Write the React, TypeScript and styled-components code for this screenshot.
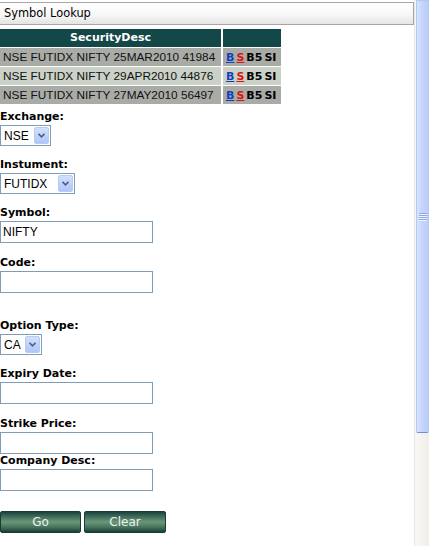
import React from 'react';
import styled, { createGlobalStyle } from 'styled-components';

const GlobalStyle = createGlobalStyle`
  html, body {
    margin: 0;
    padding: 0;
    background: #ffffff;
    overflow: hidden;
  }
`;

const Window = styled.div`
  display: flex;
  width: 429px;
  height: 546px;
`;

const Page = styled.div`
  display: flex;
  flex-direction: column;
  width: 414px;
  flex-shrink: 0;
`;

const TitleBar = styled.div`
  margin-top: 2px;
  height: 21px;
  line-height: 21px;
  padding-left: 4px;
  border: 1px solid #a6a6a6;
  border-left: 0;
  background: linear-gradient(to bottom, #ffffff 0%, #f7f7f7 55%, #e4e4e4 100%);
  font-family: 'DejaVu Sans', Verdana, sans-serif;
  font-size: 11.4px;
  color: #000000;
`;

const Grid = styled.div`
  display: grid;
  grid-template-columns: 221px 58px;
  grid-auto-rows: 18px;
  column-gap: 2px;
  row-gap: 1px;
  margin-top: 4px;
`;

const HeadCell = styled.div`
  background: #144848;
  color: #ffffff;
  font-family: 'DejaVu Sans', Verdana, sans-serif;
  font-weight: bold;
  font-size: 11px;
  line-height: 18px;
  text-align: center;
`;

const Cell = styled.div<{ $alt: boolean }>`
  display: flex;
  align-items: center;
  padding-left: 3px;
  background: ${(p) => (p.$alt ? '#cad1c6' : '#a9aca6')};
  font-family: 'Liberation Sans', Arial, sans-serif;
  font-size: 11.8px;
  color: #111111;
  white-space: nowrap;
`;

const Actions = styled(Cell)`
  gap: 2px;
  font-family: 'DejaVu Sans', Verdana, sans-serif;
  font-size: 11px;
  font-weight: bold;
  color: #000000;
`;

const Act = styled.span<{ $color?: string }>`
  color: ${(p) => p.$color || '#000000'};
  text-decoration: ${(p) => (p.$color ? 'underline' : 'none')};
  text-underline-offset: 1px;
`;

const Field = styled.div<{ $top: number }>`
  display: flex;
  flex-direction: column;
  align-items: flex-start;
  margin-top: ${(p) => p.$top}px;
`;

const Label = styled.div`
  height: 14px;
  line-height: 14px;
  margin-bottom: 1px;
  font-family: 'DejaVu Sans', Verdana, sans-serif;
  font-weight: bold;
  font-size: 11px;
  color: #000000;
`;

const SelectBox = styled.div<{ $width: number }>`
  display: flex;
  align-items: center;
  justify-content: space-between;
  box-sizing: border-box;
  width: ${(p) => p.$width}px;
  height: 21px;
  padding: 1px 1px 1px 3px;
  border: 1px solid #7f9db9;
  background: #ffffff;
  font-family: 'Liberation Sans', Arial, sans-serif;
  font-size: 12px;
  color: #000000;
`;

const DropButton = styled.div`
  display: flex;
  align-items: center;
  justify-content: center;
  box-sizing: border-box;
  width: 15px;
  height: 17px;
  border: 1px solid #b9cbf3;
  border-radius: 2px;
  background: linear-gradient(to bottom, #d3e0fd 0%, #c0d2fb 50%, #afc6f7 100%);
`;

const TextInput = styled.input`
  box-sizing: border-box;
  width: 153px;
  height: 22px;
  margin: 0;
  padding: 0 2px;
  border: 1px solid #7f9db9;
  outline: none;
  font-family: 'Liberation Sans', Arial, sans-serif;
  font-size: 12px;
  color: #000000;
  background: #ffffff;
`;

const ButtonRow = styled.div`
  display: flex;
  gap: 3px;
  margin-top: 20px;
`;

const Button = styled.button<{ $width: number }>`
  box-sizing: border-box;
  width: ${(p) => p.$width}px;
  height: 22px;
  padding: 0;
  border: 1px solid #183b36;
  border-radius: 2px;
  background: linear-gradient(
    to bottom,
    #1a4340 0%,
    #3f6a56 22%,
    #6a967a 50%,
    #44705a 78%,
    #1b3e38 100%
  );
  color: #eef3ee;
  font-family: 'DejaVu Sans', Verdana, sans-serif;
  font-size: 12px;
  line-height: 20px;
`;

const ScrollTrack = styled.div`
  display: flex;
  flex-direction: column;
  width: 14px;
  border-left: 1px solid #e6e6e6;
  background: linear-gradient(to right, #f9f8f5, #efeee8);
`;

const Thumb = styled.div`
  display: flex;
  align-items: center;
  justify-content: center;
  box-sizing: border-box;
  height: 433px;
  margin-left: 1px;
  border: 1px solid #b5c8f3;
  border-bottom-color: #6f8fd8;
  border-radius: 0 0 2px 2px;
  background: linear-gradient(to right, #d9e4fe 0%, #c6d6fc 40%, #b9ccf8 100%);
`;

const Chevron = () => (
  <svg width="7" height="5" viewBox="0 0 7 5">
    <path d="M0.5 0.8 L3.5 3.8 L6.5 0.8" fill="none" stroke="#4d6185" strokeWidth="1.6" />
  </svg>
);

const Grip = () => (
  <svg width="8" height="8" viewBox="0 0 8 8">
    {[0, 2, 4, 6].map((y) => (
      <rect key={y} x="0" y={y} width="8" height="1" fill="#8aa7ee" />
    ))}
    {[1, 3, 5, 7].map((y) => (
      <rect key={y} x="0" y={y} width="8" height="1" fill="#eef3ff" />
    ))}
  </svg>
);

const Select: React.FC<{ value: string; width: number }> = ({ value, width }) => (
  <SelectBox $width={width}>
    <span>{value}</span>
    <DropButton>
      <Chevron />
    </DropButton>
  </SelectBox>
);

const rows = [
  'NSE FUTIDX NIFTY 25MAR2010 41984',
  'NSE FUTIDX NIFTY 29APR2010 44876',
  'NSE FUTIDX NIFTY 27MAY2010 56497',
];

export default function App() {
  return (
    <Window>
      <GlobalStyle />
      <Page>
        <TitleBar>Symbol Lookup</TitleBar>

        <Grid>
          <HeadCell>SecurityDesc</HeadCell>
          <HeadCell />
          {rows.map((r, i) => (
            <React.Fragment key={r}>
              <Cell $alt={i === 1}>{r}</Cell>
              <Actions $alt={i === 1}>
                <Act $color="#1040c0">B</Act>
                <Act $color="#e01010">S</Act>
                <Act>B5</Act>
                <Act>SI</Act>
              </Actions>
            </React.Fragment>
          ))}
        </Grid>

        <Field $top={6}>
          <Label>Exchange:</Label>
          <Select value="NSE" width={51} />
        </Field>
        <Field $top={12}>
          <Label>Instument:</Label>
          <Select value="FUTIDX" width={75} />
        </Field>
        <Field $top={12}>
          <Label>Symbol:</Label>
          <TextInput defaultValue="NIFTY" />
        </Field>
        <Field $top={13}>
          <Label>Code:</Label>
          <TextInput />
        </Field>
        <Field $top={26}>
          <Label>Option Type:</Label>
          <Select value="CA" width={42} />
        </Field>
        <Field $top={12}>
          <Label>Expiry Date:</Label>
          <TextInput />
        </Field>
        <Field $top={13}>
          <Label>Strike Price:</Label>
          <TextInput />
        </Field>
        <Field $top={0}>
          <Label>Company Desc:</Label>
          <TextInput />
        </Field>

        <ButtonRow>
          <Button $width={81}>Go</Button>
          <Button $width={82}>Clear</Button>
        </ButtonRow>
      </Page>

      <ScrollTrack>
        <Thumb>
          <Grip />
        </Thumb>
      </ScrollTrack>
    </Window>
  );
}
